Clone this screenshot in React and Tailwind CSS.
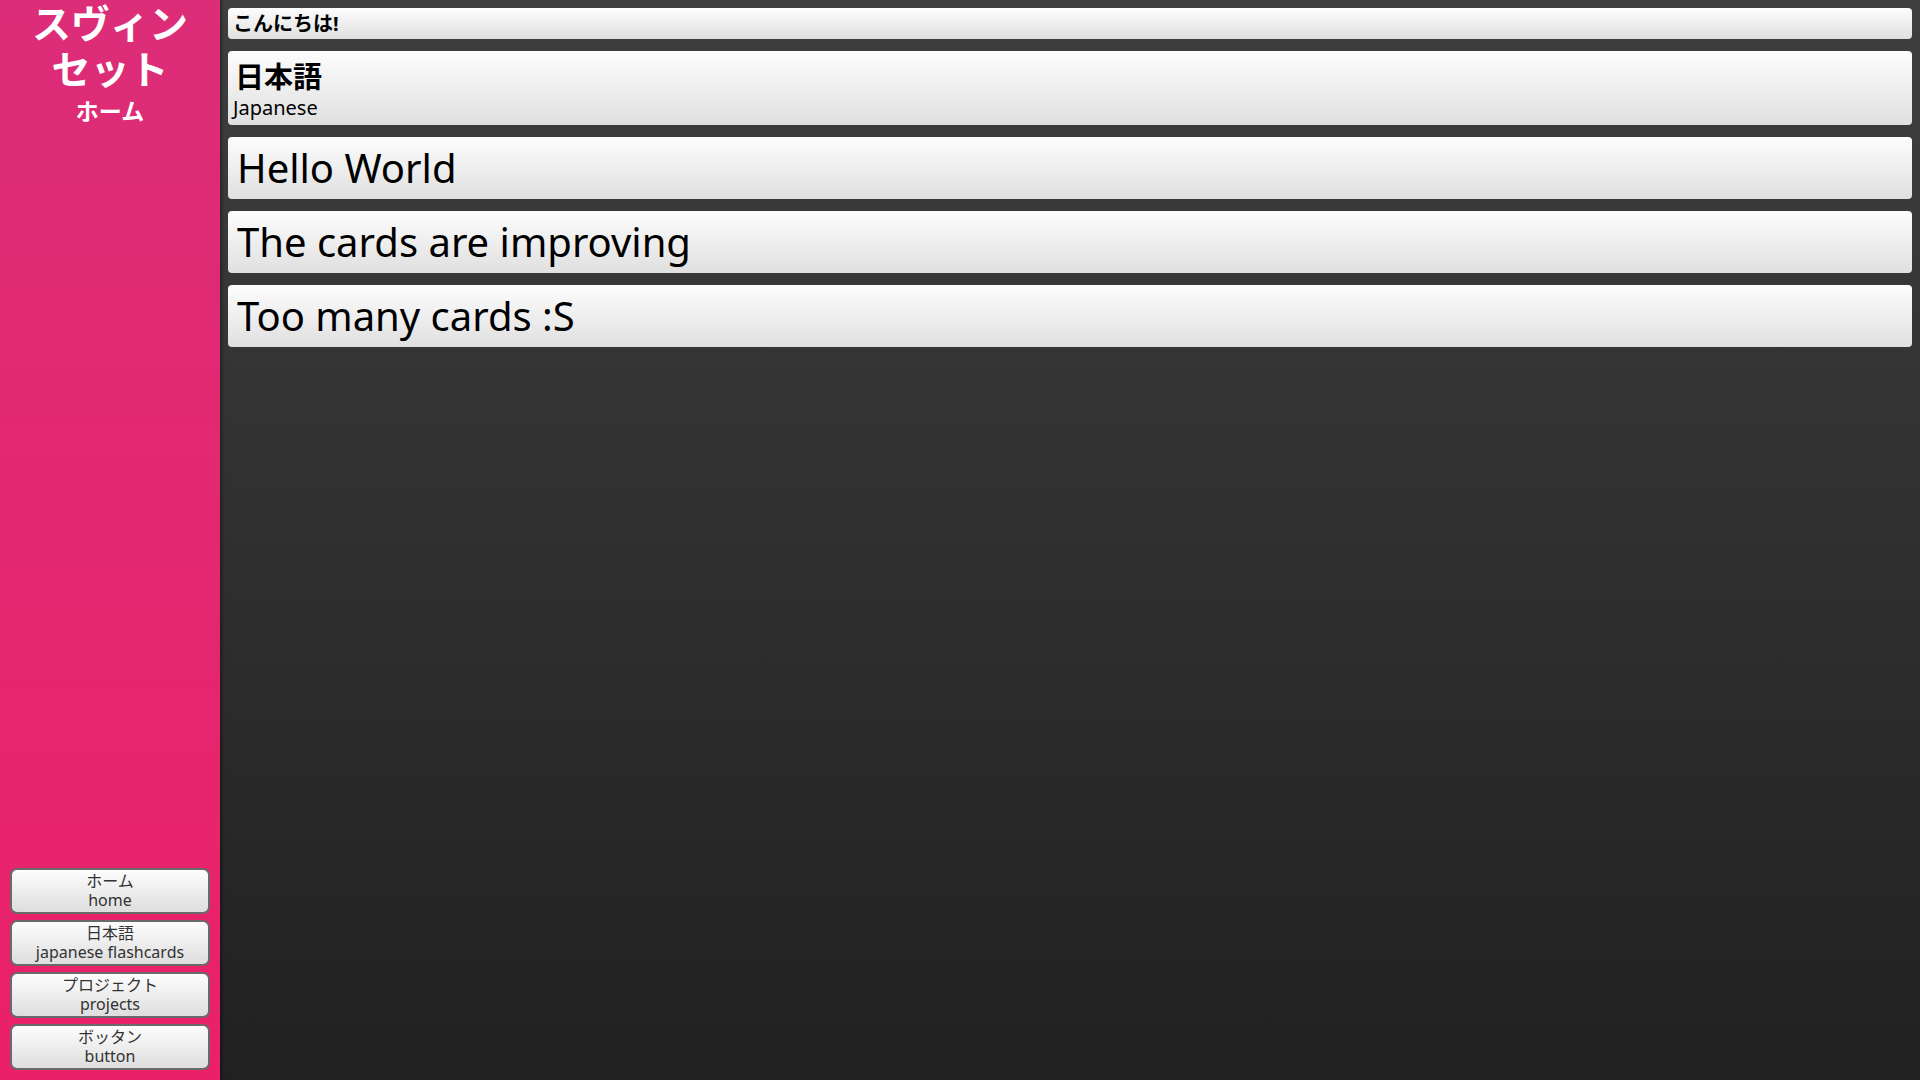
import React from 'react';

const cards = [
  { title: 'Hello World' },
  { title: 'The cards are improving' },
  { title: 'Too many cards :S' },
];

const navButtons = [
  { jp: 'ホーム', en: 'home' },
  { jp: '日本語', en: 'japanese flashcards' },
  { jp: 'プロジェクト', en: 'projects' },
  { jp: 'ボッタン', en: 'button' },
];

const font = "font-['Noto_Sans','Noto_Sans_CJK_JP',sans-serif]";

export default function App() {
  return (
    <div className={`flex h-screen w-full overflow-hidden ${font}`}>
      {/* sidebar */}
      <aside className="flex h-full w-[220px] shrink-0 flex-col bg-gradient-to-b from-[#dc2d78] to-[#ea2068] shadow-[2px_0_3px_rgba(0,0,0,0.35)] z-10">
        <div className="flex flex-col items-center text-white font-bold">
          <h1 className="flex flex-col items-center text-[39px]">
            <span className="leading-[46px]">スヴィン</span>
            <span className="leading-[46px]">セット</span>
          </h1>
          <span className="mt-[5px] text-[23px] leading-[28px]">ホーム</span>
        </div>
        <nav className="mt-auto flex flex-col gap-[6px] px-[10px] pb-[10px]">
          {navButtons.map((b) => (
            <button
              key={b.en}
              className="flex h-[46px] flex-col items-center justify-center rounded-[7px] border-2 border-[#6a6a6a] bg-gradient-to-b from-[#fdfdfd] to-[#dedede] text-[#333] leading-[19px]"
            >
              <span className="text-[16px]">{b.jp}</span>
              <span className="text-[16px]">{b.en}</span>
            </button>
          ))}
        </nav>
      </aside>

      {/* main */}
      <main className="flex h-full flex-1 flex-col gap-[12px] bg-gradient-to-b from-[#3f3f3f] to-[#212121] p-[8px]">
        <div className="flex h-[31px] items-center rounded-[4px] bg-gradient-to-b from-[#fdfdfd] to-[#e0e0e0] px-[5px] text-[20px] font-bold text-black">
          こんにちは!
        </div>
        <div className="flex h-[74px] flex-col justify-center rounded-[4px] bg-gradient-to-b from-[#fdfdfd] to-[#e0e0e0] px-[5px] pt-[2px] text-black">
          <span className="pl-[2px] text-[29px] font-bold leading-[37px]">日本語</span>
          <span className="text-[20px] leading-[26px]">Japanese</span>
        </div>
        {cards.map((c) => (
          <div
            key={c.title}
            className="flex h-[62px] items-center rounded-[4px] bg-gradient-to-b from-[#fdfdfd] to-[#e0e0e0] px-[9px] text-[40px] text-black"
          >
            {c.title}
          </div>
        ))}
      </main>
    </div>
  );
}
